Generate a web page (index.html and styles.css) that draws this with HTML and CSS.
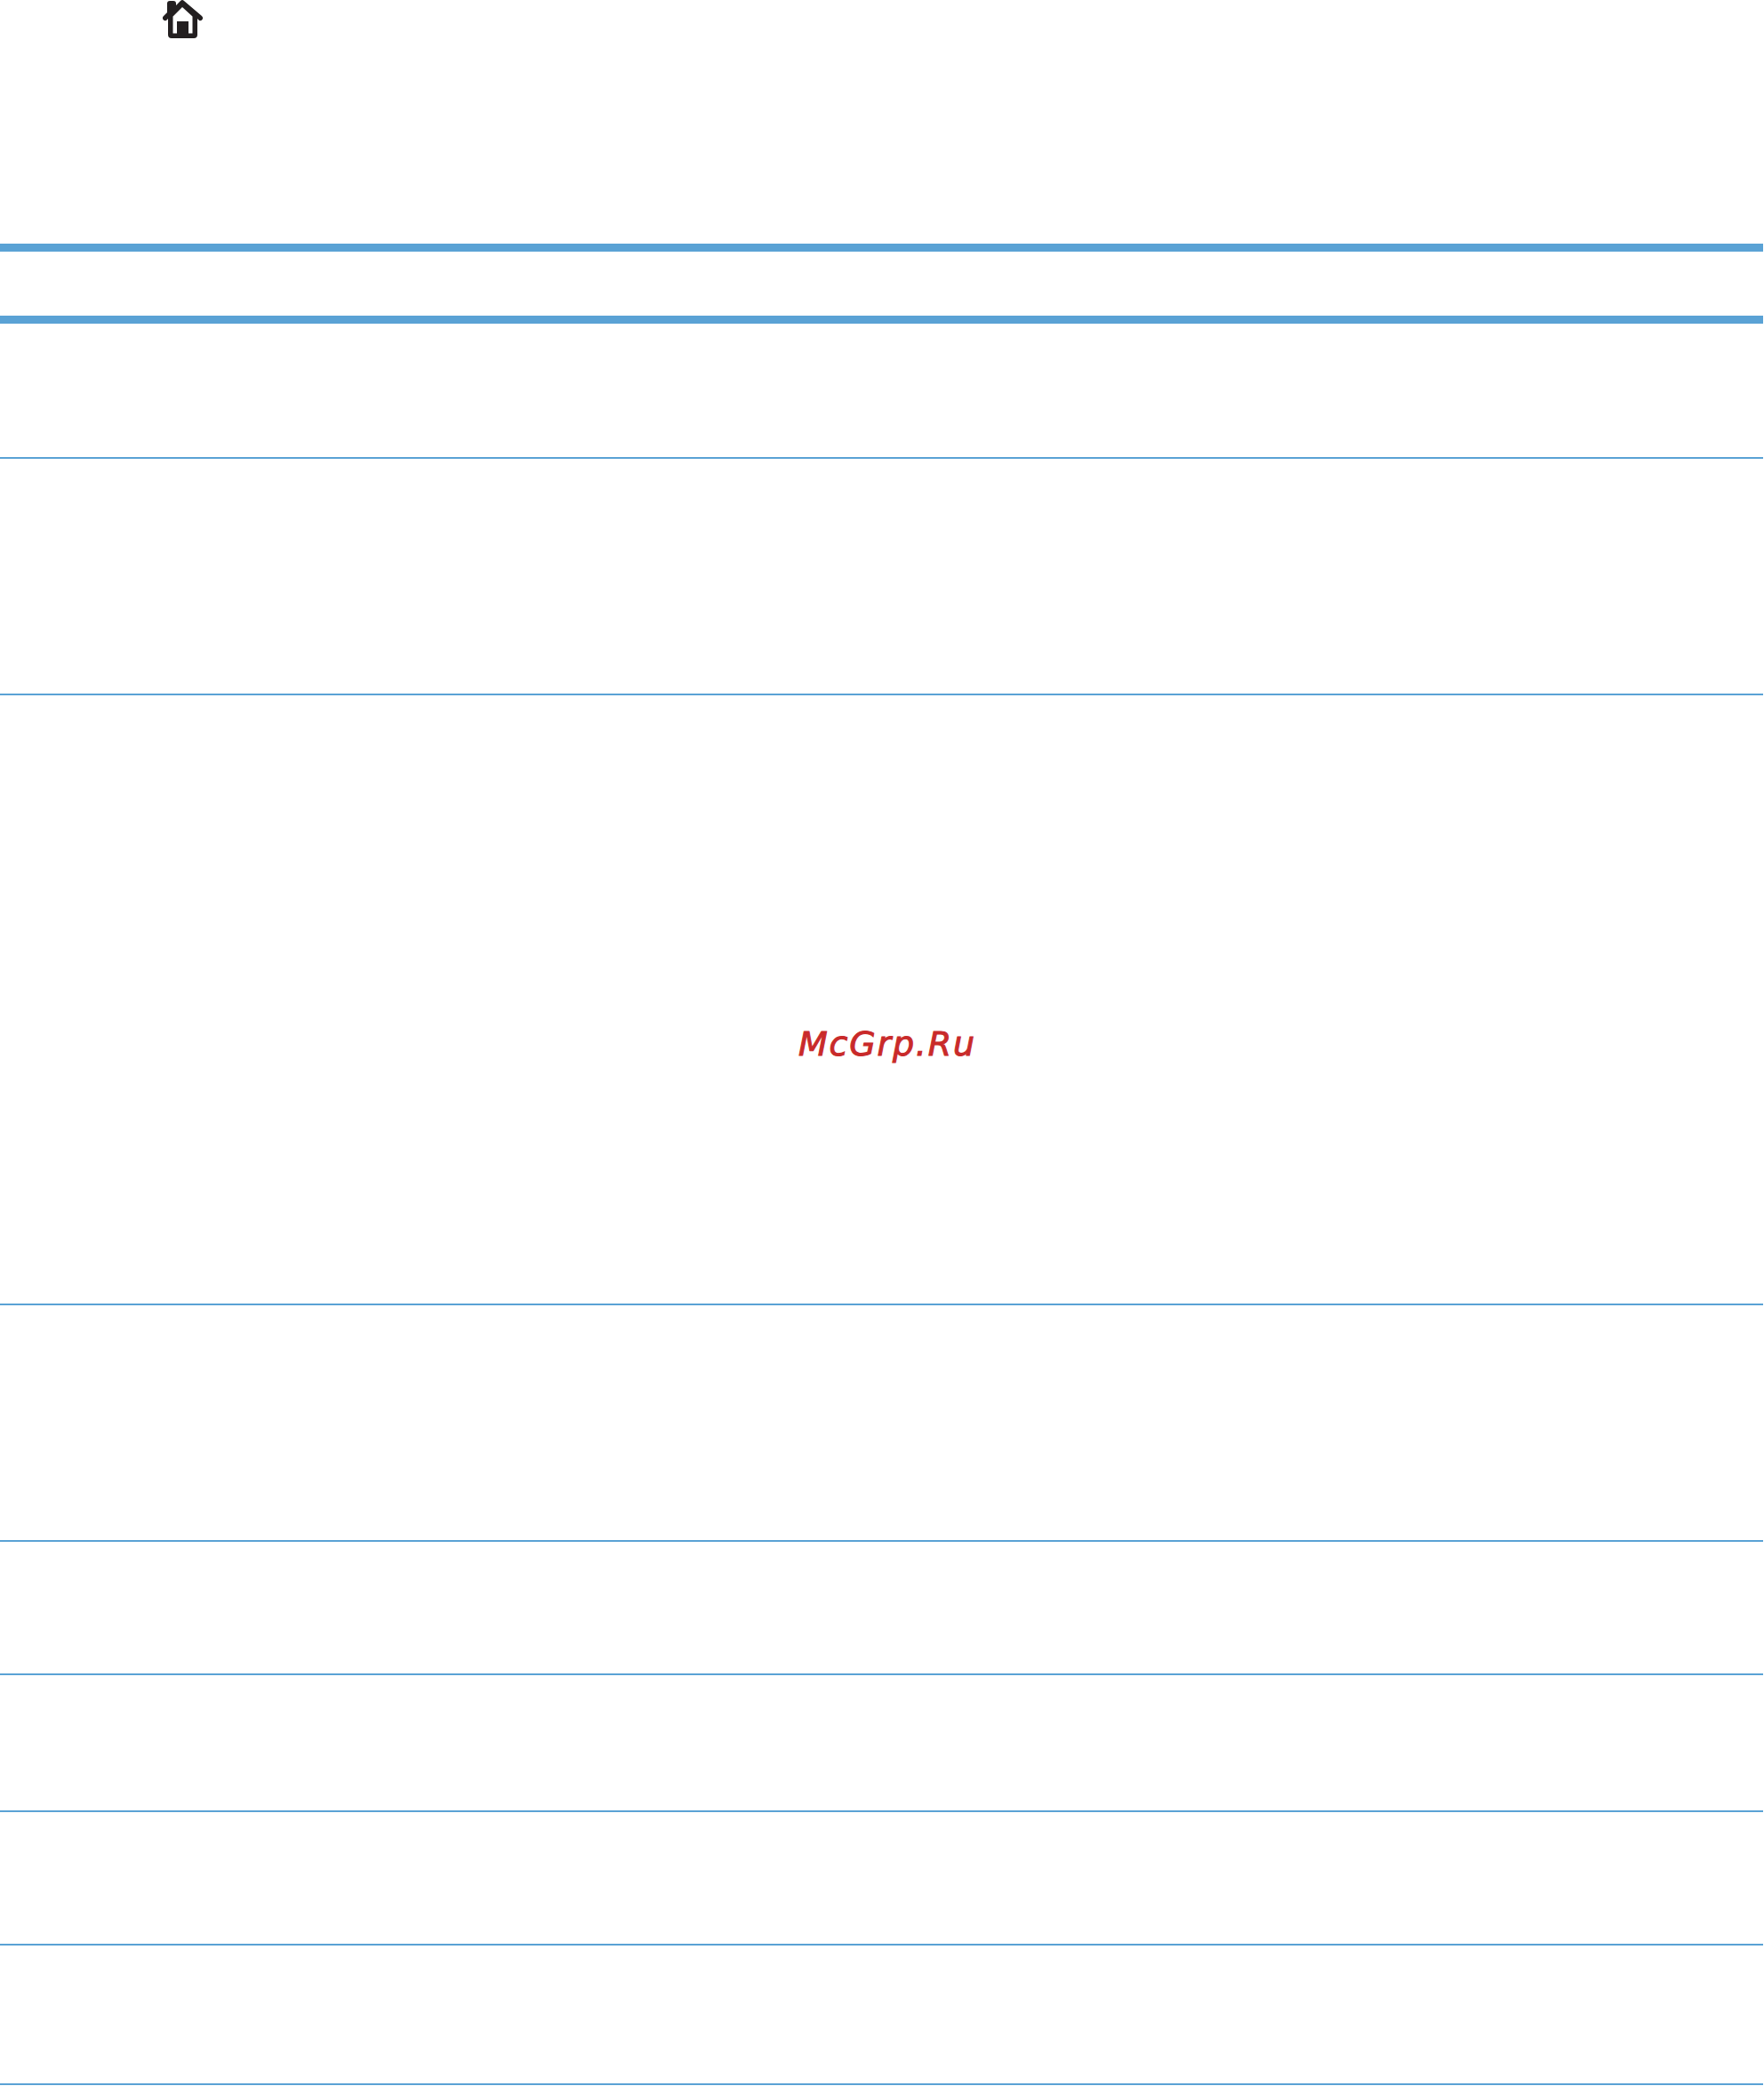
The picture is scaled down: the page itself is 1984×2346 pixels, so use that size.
FILE: index.html
```html
<!DOCTYPE html>
<html lang="en">
<head>
<meta charset="utf-8">
<title>McGrp.Ru</title>
<link rel="stylesheet" href="styles.css">
</head>
<body>
<div class="page">
  <header class="top">
    <svg class="home" width="46" height="44" viewBox="0 0 46 44" aria-hidden="true">
      <path class="home-fill" d="M22 0 Q23 0 24 1 L44 18 Q46 20 44.500 22 Q43 24 41 23 L39 21 V39 Q39 43 35 43 H10 Q6 43 6 39 V21 L4 23 Q2 24 .5 22 Q-1 20 1 18 L5 14 V4 Q5 1 8 1 H12 Q15 1 15 4 V6 L20 1 Q21 0 22 0 Z"/>
      <path class="home-cut" d="M22 8 L33.500 18.500 V37.500 H29 V24 H16 V37.500 H11.500 V18.500 Z"/>
    </svg>
  </header>
  <div class="rule rule-thick r1"></div>
  <div class="rule rule-thick r2"></div>
  <div class="rule rule-thin r3"></div>
  <div class="rule rule-thin r4"></div>
  <div class="rule rule-thin r5"></div>
  <div class="rule rule-thin r6"></div>
  <div class="rule rule-thin r7"></div>
  <div class="rule rule-thin r8"></div>
  <div class="rule rule-thin r9"></div>
  <div class="rule rule-thin r10"></div>
  <div class="mark">McGrp.Ru</div>
</div>
</body>
</html>
```
FILE: styles.css
```css
html, body {
  margin: 0;
  padding: 0;
  background: #fff;
}
.page {
  position: relative;
  width: 1984px;
  height: 2346px;
  overflow: hidden;
  background: #fff;
}
.top {
  height: 274px;
  padding-left: 183px;
  box-sizing: border-box;
}
.home {
  display: block;
}
.home-fill {
  fill: #231f20;
}
.home-cut {
  fill: #fff;
}
.rule {
  position: absolute;
  left: 0;
  width: 1983px;
  background: #5aa2d5;
}
.rule-thick { height: 9px; }
.rule-thin { height: 2px; }
.r1 { top: 274px; }
.r2 { top: 355px; }
.r3 { top: 514px; }
.r4 { top: 780px; }
.r5 { top: 1466px; }
.r6 { top: 1732px; }
.r7 { top: 1882px; }
.r8 { top: 2036px; }
.r9 { top: 2186px; }
.r10 { top: 2343px; }
.mark {
  position: absolute;
  left: 898px;
  top: 1149px;
  font-family: "DejaVu Sans", sans-serif;
  font-style: italic;
  font-size: 38px;
  line-height: 50px;
  letter-spacing: 1.800px;
  color: #c92a2a;
  -webkit-text-stroke: 1px #c92a2a;
}
```
